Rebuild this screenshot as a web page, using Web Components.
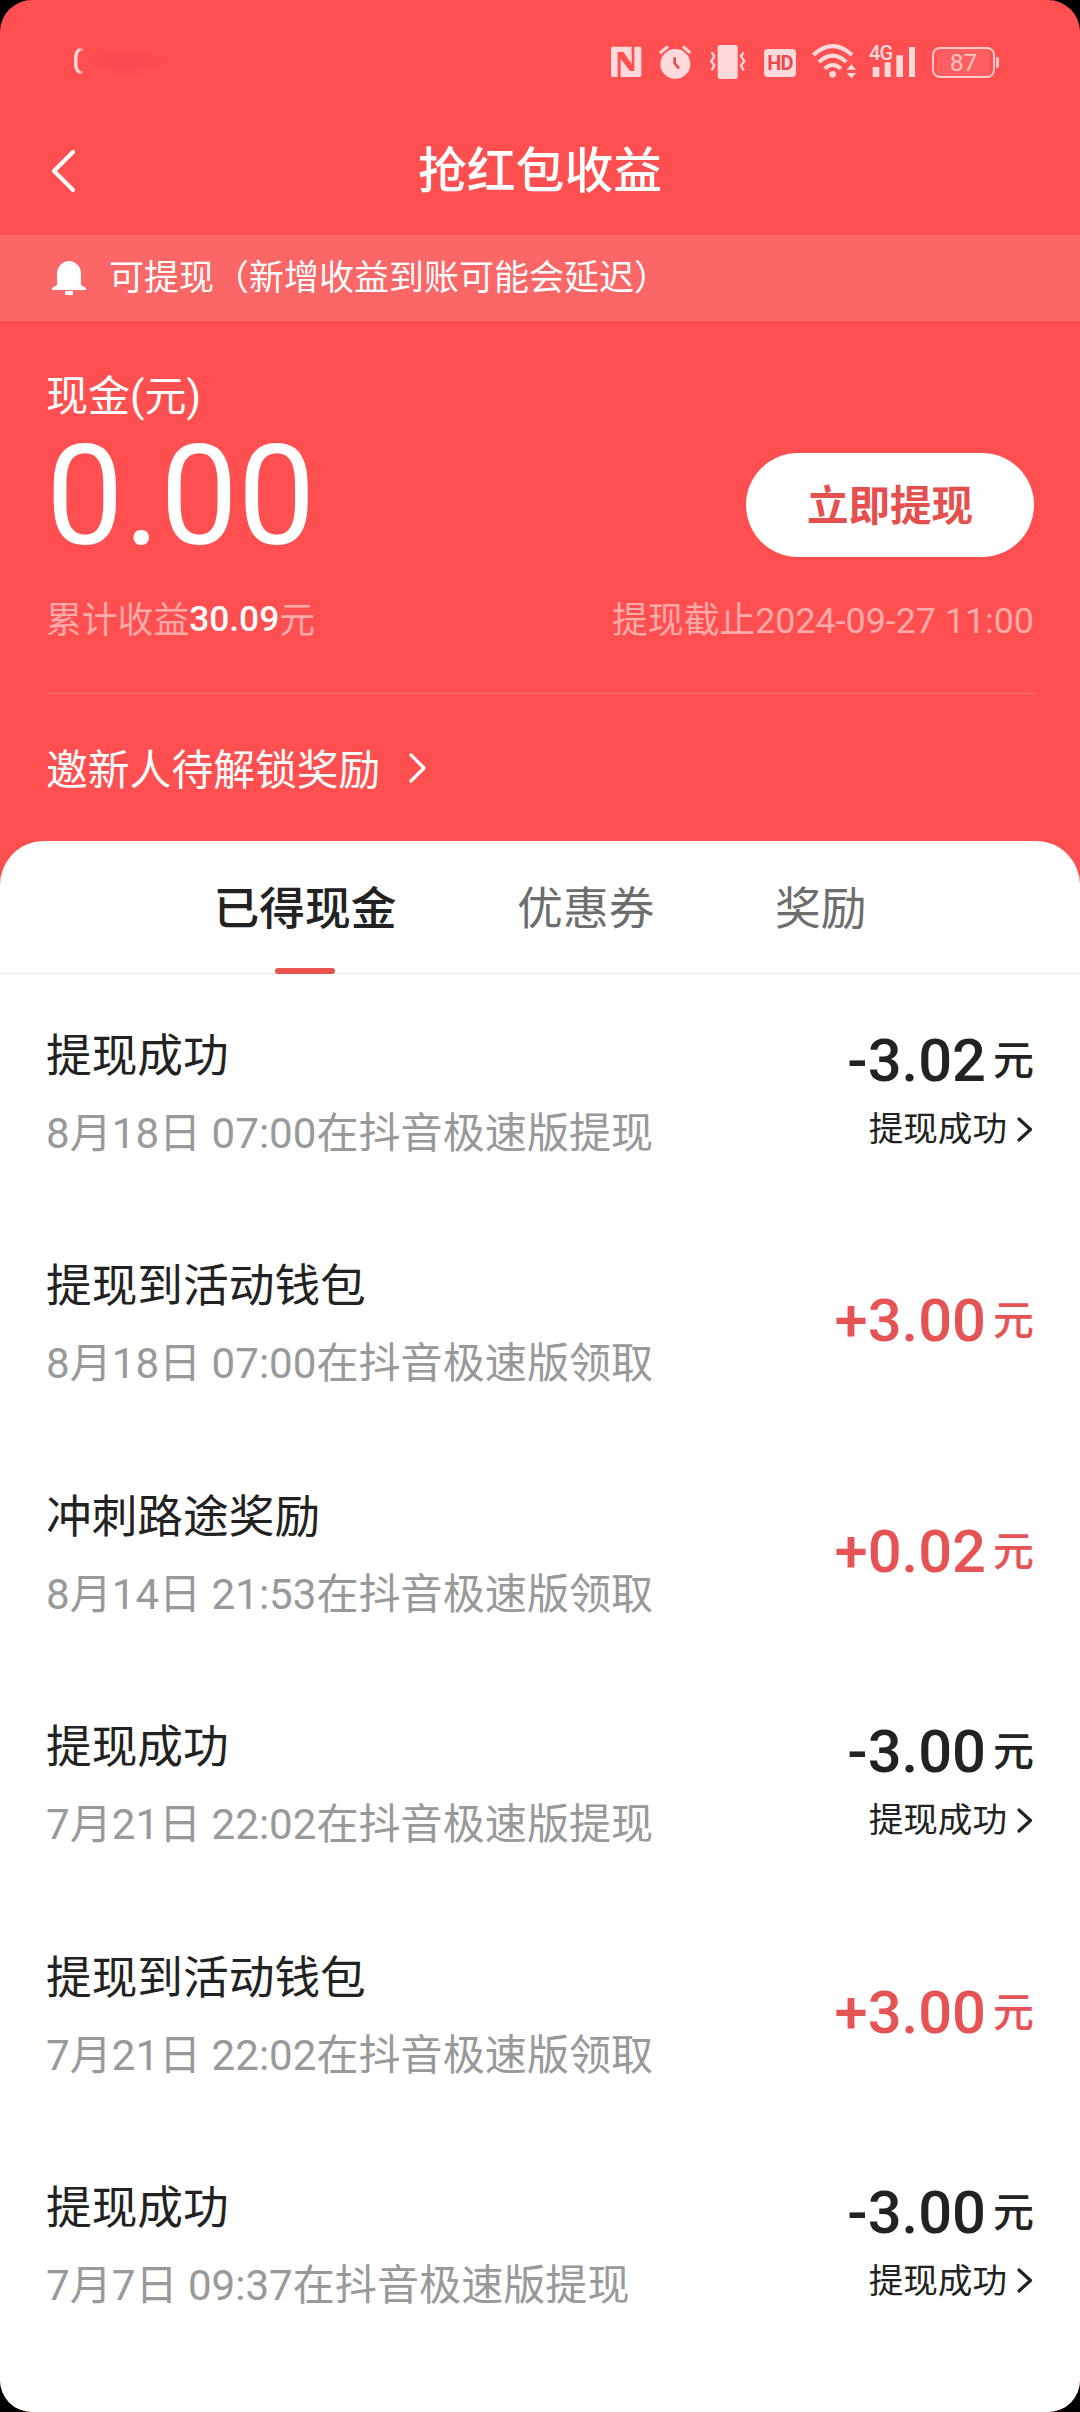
<!DOCTYPE html>
<html lang="zh-CN">
<head>
<meta charset="utf-8">
<title>抢红包收益</title>
<style>
html{background:#000}
body{margin:0;background:#000;font-family:Roboto,"Noto Sans CJK SC",sans-serif}
</style>
</head>
<body>
<earnings-page></earnings-page>
<script>
const define = (name, render) => customElements.define(name, class extends HTMLElement {
  constructor() { super(); this.attachShadow({ mode: 'open' }); }
  connectedCallback() { this.shadowRoot.innerHTML = render(this); }
});

const line = 'fill="none" stroke="currentColor" stroke-linecap="round" stroke-linejoin="round"';
// name: [width, height, viewBox, markup]
const ICONS = {
  nfc: [31, 40, '62 66 93 120', `<path fill="currentColor" fill-rule="evenodd" d="M68 80H148Q153 80 153 85V166Q153 171 148 171H68Q62 171 62 166V85Q62 80 68 80ZM82 96V171H91V116L119 153H132V80H124V132L99 96Z"/>`],
  alarm: [33, 40, '203 66 99 120', `<circle cx="252" cy="132" r="45" fill="currentColor"/><path d="M206 99L230 79M275 79L297 99" stroke="currentColor" stroke-width="9"/><path d="M250 112V130L263 145" fill="none" stroke="#d9534f" stroke-width="8"/>`],
  vibrate: [36, 40, '356 66 108 120', `<rect x="379" y="75" width="60" height="102" rx="7" fill="currentColor"/><path d="M361 97L369 108L360 124L369 136L361 151M457 97L449 108L459 124L449 136L457 151" fill="none" stroke="currentColor" stroke-width="7"/>`],
  wifi: [45, 40, '663 66 135 120', `<g fill="none" stroke="currentColor" stroke-width="12"><path d="M667 105Q725 52 783 105"/><path d="M684 126Q725 88 766 126"/><path d="M701 146Q725 124 750 146"/></g><circle cx="725" cy="163" r="10" fill="currentColor"/><path d="M767 149L781 133L795 149ZM767 159H795L781 175Z" fill="currentColor"/>`],
  bell: [34, 36, '0 0 34 36', `<path fill="currentColor" d="M5 25V14A12 13 0 0 1 29 14V25L34 28V30H0V28Z"/><rect x="13" y="31" width="8" height="4" rx="1" fill="currentColor"/>`],
  back: [26, 44, '0 0 26 44', `<path d="M22 2L3 21L22 40" ${line} stroke-width="4"/>`],
  more: [18, 30, '0 0 18 30', `<path d="M2 2L15 15L2 28" ${line} stroke-width="3.200"/>`],
  detail: [16, 26, '0 0 16 26', `<path d="M2 2L13.500 12.500L2 23" ${line} stroke-width="3.200"/>`]
};
define('ui-icon', el => {
  const [w, h, box, body] = ICONS[el.getAttribute('name')];
  return `<style>:host{display:block;flex:none;width:${w}px;height:${h}px}svg{display:block}</style>
    <svg width="${w}" height="${h}" viewBox="${box}" aria-hidden="true">${body}</svg>`;
});

define('signal-meter', () => `<style>
  :host{display:block;position:relative;width:47px;height:40px}
  svg{display:block}
  span{position:absolute;left:0;top:1px;font:500 20px/20px Roboto,sans-serif;letter-spacing:-.8px}
  </style><svg width="47" height="40" viewBox="836 66 141 120" aria-hidden="true"><path fill="currentColor" d="M847 141h20v30h-20zM883 127h18v44h-18zM918 106h20v65h-20zM956 81h18v90h-18z"/></svg><span>4G</span>`);

define('status-bar', () => `<style>
  :host{display:flex;justify-content:space-between;box-sizing:border-box;height:124px;padding:42px 81px 0 72px;color:#ffd9db}
  .time{width:12px;height:40px;overflow:hidden;font-size:37px;line-height:40px;
    -webkit-mask-image:linear-gradient(90deg,#000 55%,transparent)}
  .smudge{width:85px;height:30px;margin-top:5px;background:radial-gradient(closest-side,rgba(240,66,85,.4),transparent)}
  .left,.icons{display:flex}
  .hd{box-sizing:border-box;width:32px;height:28px;margin:7px 16px 0 18px;border-radius:4px;background:#ffd9db;color:#e9494b;
    font:700 20px/28px Roboto,sans-serif;text-align:center;letter-spacing:-.8px}
  .alarm{margin:0 18px 0 17px}
  signal-meter{margin:0 16px 0 12px}
  .battery{display:flex;align-items:center;height:32px;margin-top:4px}
  .cell{box-sizing:border-box;width:63px;height:31px;border:2px solid #ffc9c9;border-radius:8px;
    font-size:24px;line-height:28px;text-align:center;color:#ffc4c4;background:#ff5f60;background-clip:content-box;padding:0 3px}
  .tip{width:3px;height:11px;margin-left:1px;background:#ffc4c4;border-radius:0 2px 2px 0}
  </style>
  <div class="left"><div class="time">0</div><div class="smudge"></div></div>
  <div class="icons"><ui-icon name="nfc"></ui-icon><ui-icon class="alarm" name="alarm"></ui-icon><ui-icon name="vibrate"></ui-icon>
  <div class="hd">HD</div><ui-icon name="wifi"></ui-icon><signal-meter></signal-meter>
  <div class="battery"><div class="cell">87</div><div class="tip"></div></div></div>`);

define('title-bar', () => `<style>
  :host{display:grid;grid-template-columns:1fr auto 1fr;align-items:center;height:94px;padding:0 51px;margin-bottom:17px;color:#fff}
  h1{margin:0;font-size:48.8px;line-height:96px;font-weight:500}
  </style><ui-icon name="back"></ui-icon><h1><slot></slot></h1>`);

define('notice-bar', () => `<style>
  :host{display:flex;align-items:center;gap:23px;height:86px;padding-left:52px;background:#fb6666;color:#fff;font-size:35px}
  span{line-height:86px;padding-top:2px}
  </style><ui-icon name="bell"></ui-icon><span><slot></slot></span>`);

define('pill-button', () => `<style>
  :host{display:block}
  button{display:block;width:288px;height:104px;padding:4px 0 0;border:0;border-radius:52px;background:#fff;color:#e5504f;
    font:700 41.5px/100px Roboto,"Noto Sans CJK SC",sans-serif}
  </style><button><slot></slot></button>`);

define('cash-summary', () => `<style>
  :host{display:block;box-sizing:border-box;height:520px;padding:45px 46px 0;color:#fff}
  .label{font-size:42px;line-height:62px}
  .main{display:flex;justify-content:space-between;height:134px}
  .sum{font-size:138.24px;line-height:132px;margin-top:3px}
  pill-button{margin-top:25px}
  .info{display:flex;justify-content:space-between;margin-top:29px;font-size:35.8px;line-height:60px;color:#ffabab;height:60px}
  b{font-weight:500;font-size:35.3px;color:#fff;display:inline-block;line-height:57px;vertical-align:top}
  .rule{height:1px;margin-top:42px;background:#ff7070}
  .invite{display:flex;align-items:center;gap:29px;font-size:41.8px;line-height:60px;margin-top:47px}
  .invite ui-icon{margin-top:-6px}
  </style>
  <div class="label">现金(元)</div>
  <div class="main"><div class="sum">0.00</div><pill-button>立即提现</pill-button></div>
  <div class="info"><span>累计收益<b>30.09</b>元</span><span>提现截止2024-09-27 11:00</span></div>
  <div class="rule"></div>
  <div class="invite"><span>邀新人待解锁奖励</span><ui-icon name="more"></ui-icon></div>`);

define('tab-item', () => `<style>
  :host{display:flex;flex-direction:column;align-items:center;height:133px;font-size:45.8px;line-height:138px;color:#6d6d6d}
  :host([active]){color:#222;font-weight:500}
  i{display:none;width:60px;height:6px;margin-top:-11px;border-radius:3px;background:#e9524f}
  :host([active]) i{display:block}
  </style><slot></slot><i></i>`);

define('tab-strip', () => `<style>
  :host{display:flex;justify-content:center;gap:120.500px;height:132px;border-bottom:1px solid #ececec}
  </style><slot></slot>`);

define('record-row', el => {
  const a = n => el.getAttribute(n);
  const income = a('amount')[0] === '+';
  return `<style>
  :host{display:flex;justify-content:space-between;box-sizing:border-box;height:230.4px;padding:43px 46px 0;color:#222}
  .title{font-size:45.7px;line-height:78px}
  .sub{font-size:42.1px;line-height:76px;color:#999}
  .right{display:flex;flex-direction:column;align-items:flex-end}
  .income{color:#e65355;padding-top:30px}
  .amount{display:flex;gap:7px;font-size:59.7px;line-height:86px;height:86px;font-weight:500}
  .unit{font-size:41px;line-height:86px}
  .state{display:flex;align-items:center;gap:10px;font-size:34.6px;line-height:50px;margin-top:0}
  .state ui-icon{margin:1px 1px 0 0}
  </style>
  <div><div class="title">${a('label')}</div><div class="sub">${a('detail')}</div></div>
  <div class="right ${income ? 'income' : ''}"><div class="amount"><span>${a('amount')}</span><span class="unit">元</span></div>
  ${income ? '' : '<div class="state"><span>提现成功</span><ui-icon name="detail"></ui-icon></div>'}</div>`;
});

define('earnings-page', () => `<style>
  :host{display:block;width:1080px;height:2412px;overflow:hidden;border-radius:32px;background:#ff4f50}
  main{height:1571px;border-radius:44px 44px 0 0;background:#fff}
  .records{padding-top:1px}
  </style>
  <status-bar></status-bar>
  <title-bar>抢红包收益</title-bar>
  <notice-bar>可提现（新增收益到账可能会延迟）</notice-bar>
  <cash-summary></cash-summary>
  <main>
    <tab-strip><tab-item active>已得现金</tab-item><tab-item>优惠券</tab-item><tab-item>奖励</tab-item></tab-strip>
    <div class="records">
      <record-row label="提现成功" detail="8月18日 07:00在抖音极速版提现" amount="-3.02"></record-row>
      <record-row label="提现到活动钱包" detail="8月18日 07:00在抖音极速版领取" amount="+3.00"></record-row>
      <record-row label="冲刺路途奖励" detail="8月14日 21:53在抖音极速版领取" amount="+0.02"></record-row>
      <record-row label="提现成功" detail="7月21日 22:02在抖音极速版提现" amount="-3.00"></record-row>
      <record-row label="提现到活动钱包" detail="7月21日 22:02在抖音极速版领取" amount="+3.00"></record-row>
      <record-row label="提现成功" detail="7月7日 09:37在抖音极速版提现" amount="-3.00"></record-row>
    </div>
  </main>`);
</script>
</body>
</html>
